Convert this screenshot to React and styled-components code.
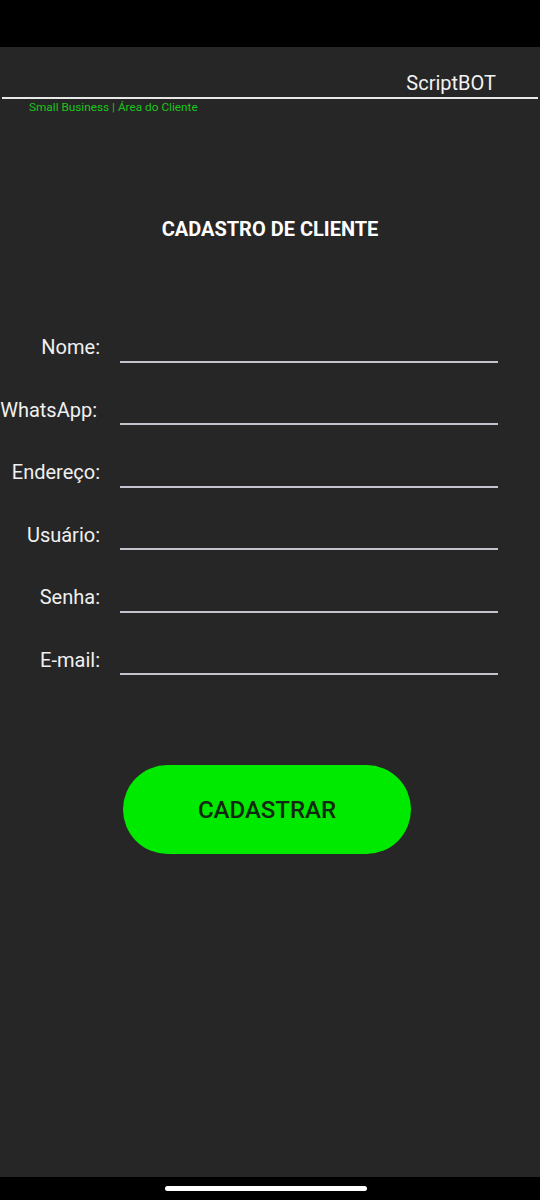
import React from "react";
import styled, { createGlobalStyle } from "styled-components";

const Global = createGlobalStyle`
  html, body { margin: 0; padding: 0; background: #262626; }
  body { font-family: Roboto, "Noto Sans", "Liberation Sans", sans-serif; }
  * { box-sizing: border-box; }
`;

const Screen = styled.div`
  width: 540px;
  height: 1200px;
  display: flex;
  flex-direction: column;
  background: #262626;
  overflow: hidden;
`;

const StatusBar = styled.div`
  height: 47px;
  background: #000;
  flex: none;
`;

const Main = styled.main`
  flex: 1;
  display: flex;
  flex-direction: column;
`;

const Header = styled.header`
  display: flex;
  flex-direction: column;
  padding-top: 24px;
`;

const Brand = styled.div`
  align-self: flex-end;
  padding-right: 44px;
  color: #f2f2f2;
  font-size: 20px;
  line-height: 24px;
`;

const Rule = styled.div`
  margin: 2px 2px 0;
  height: 2px;
  background: #e8e8e8;
`;

const Subtitle = styled.div`
  padding-left: 29px;
  margin-top: 1px;
  color: #1cc41c;
  font-size: 11.8px;
  line-height: 14px;
`;

const Title = styled.h1`
  margin: 104px 0 0;
  text-align: center;
  color: #ffffff;
  font-size: 20px;
  font-weight: 700;
  line-height: 23px;
`;

const Form = styled.form`
  margin-top: 59px;
  display: flex;
  flex-direction: column;
`;

const Row = styled.label`
  height: 62.5px;
  display: flex;
  align-items: flex-end;
  gap: 20px;
`;

const Label = styled.span`
  width: 100px;
  padding-right: ${(p) => p.$pad || 0}px;
  flex: none;
  text-align: right;
  white-space: nowrap;
  color: #f0f0f0;
  font-size: 20px;
  line-height: 23px;
  margin-bottom: 3.5px;
`;

const Field = styled.input`
  width: 378px;
  height: 36px;
  border: none;
  border-bottom: 2px solid #c3c3cd;
  background: transparent;
  color: #fff;
  font-family: inherit;
  font-size: 18px;
  outline: none;
  padding: 0;
`;

const Button = styled.button`
  margin: 90px 0 0 123px;
  width: 288px;
  height: 89px;
  border: none;
  border-radius: 45px;
  background: #00ea00;
  color: #112811;
  font-family: inherit;
  font-size: 24px;
  font-weight: 500;
  cursor: pointer;
`;

const NavBar = styled.div`
  height: 23px;
  background: #000;
  flex: none;
  display: flex;
  justify-content: center;
  padding-top: 9px;
`;

const HomePill = styled.div`
  width: 202px;
  height: 5px;
  margin-left: -9px;
  border-radius: 3px;
  background: #fff;
`;

const fields = [
  { label: "Nome:" },
  { label: "WhatsApp:", pad: 3 },
  { label: "Endereço:" },
  { label: "Usuário:" },
  { label: "Senha:", type: "password" },
  { label: "E-mail:", type: "email" },
];

export default function App() {
  return (
    <>
      <Global />
      <Screen>
        <StatusBar />
        <Main>
          <Header>
            <Brand>ScriptBOT</Brand>
            <Rule />
            <Subtitle>Small Business | Área do Cliente</Subtitle>
          </Header>
          <Title>CADASTRO DE CLIENTE</Title>
          <Form onSubmit={(e) => e.preventDefault()}>
            {fields.map((f) => (
              <Row key={f.label}>
                <Label $pad={f.pad}>{f.label}</Label>
                <Field type={f.type || "text"} />
              </Row>
            ))}
          </Form>
          <div>
            <Button type="button">CADASTRAR</Button>
          </div>
        </Main>
        <NavBar>
          <HomePill />
        </NavBar>
      </Screen>
    </>
  );
}
